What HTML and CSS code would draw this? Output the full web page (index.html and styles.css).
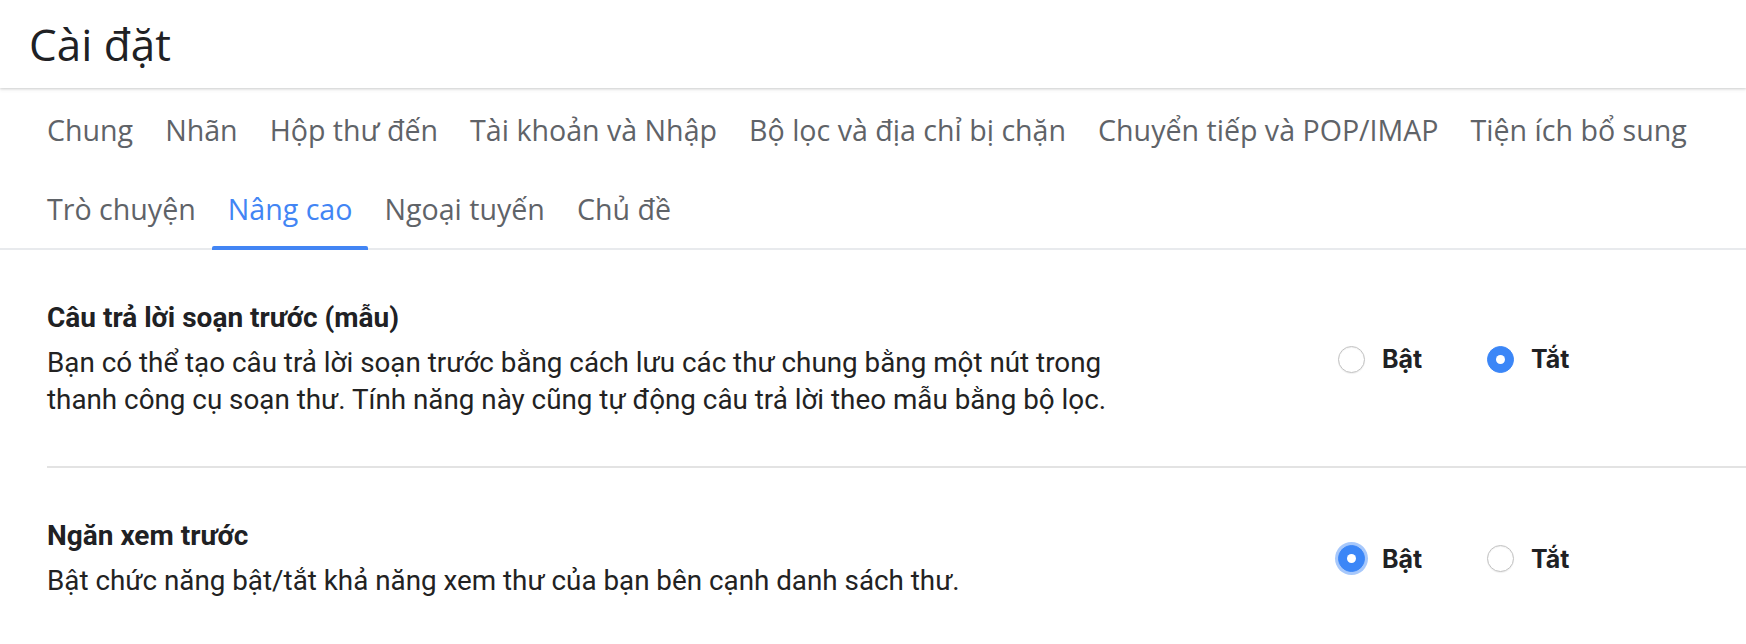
FILE: index.html
```html
<!DOCTYPE html>
<html lang="vi">
<head>
<meta charset="utf-8">
<title>Cài đặt</title>
<link rel="stylesheet" href="styles.css">
</head>
<body>
<header class="topbar">
  <h1 class="title">Cài đặt</h1>
</header>
<nav class="tabs">
  <div class="tab-row">
    <a class="tab">Chung</a>
    <a class="tab">Nhãn</a>
    <a class="tab">Hộp thư đến</a>
    <a class="tab">Tài khoản và Nhập</a>
    <a class="tab">Bộ lọc và địa chỉ bị chặn</a>
    <a class="tab">Chuyển tiếp và POP/IMAP</a>
    <a class="tab">Tiện ích bổ sung</a>
  </div>
  <div class="tab-row">
    <a class="tab">Trò chuyện</a>
    <a class="tab active">Nâng cao</a>
    <a class="tab">Ngoại tuyến</a>
    <a class="tab">Chủ đề</a>
  </div>
</nav>
<main class="content">
  <section class="setting">
    <div class="setting-text">
      <h2 class="setting-title">Câu trả lời soạn trước (mẫu)</h2>
      <p class="setting-desc">Bạn có thể tạo câu trả lời soạn trước bằng cách lưu các thư chung bằng một nút trong thanh công cụ soạn thư. Tính năng này cũng tự động câu trả lời theo mẫu bằng bộ lọc.</p>
    </div>
    <div class="options">
      <label class="option"><span class="radio"></span><span class="option-label">Bật</span></label>
      <label class="option"><span class="radio checked"></span><span class="option-label">Tắt</span></label>
    </div>
  </section>
  <hr class="divider">
  <section class="setting">
    <div class="setting-text">
      <h2 class="setting-title">Ngăn xem trước</h2>
      <p class="setting-desc">Bật chức năng bật/tắt khả năng xem thư của bạn bên cạnh danh sách thư.</p>
    </div>
    <div class="options">
      <label class="option"><span class="radio checked focused"></span><span class="option-label">Bật</span></label>
      <label class="option"><span class="radio"></span><span class="option-label">Tắt</span></label>
    </div>
  </section>
</main>
</body>
</html>
```

FILE: styles.css
```css
* { box-sizing: border-box; }

body {
  margin: 0;
  background: #ffffff;
  font-family: "Roboto", "Liberation Sans", sans-serif;
  color: #202124;
  overflow: hidden;
}

.topbar {
  height: 88px;
  display: flex;
  align-items: center;
  padding-left: 29px;
  background: #fff;
  box-shadow: 0 1px 2px rgba(60, 64, 67, 0.18), 0 2px 4px rgba(60, 64, 67, 0.08);
  position: relative;
  z-index: 1;
}

.title {
  margin: 0;
  font-family: "Open Sans", "Noto Sans", sans-serif;
  font-weight: 400;
  font-size: 44px;
  color: #202124;
  letter-spacing: 0;
}

.tabs {
  margin-top: 2px;
  padding-left: 31px;
  border-bottom: 2px solid #e8eaed;
}

.tab-row {
  display: flex;
  height: 79px;
}

.tab {
  display: flex;
  align-items: center;
  padding: 0 16px;
  font-family: "Open Sans", "Noto Sans", sans-serif;
  font-weight: 500;
  font-size: 28.6px;
  color: #5f6368;
  position: relative;
  white-space: nowrap;
}

.tab.active {
  color: #4285f4;
}

.tab.active::after {
  content: "";
  position: absolute;
  left: 0;
  right: 0;
  bottom: -2px;
  height: 4px;
  background: #4285f4;
  border-radius: 2px 2px 0 0;
}

.content {
  padding-left: 47px;
}

.setting {
  display: flex;
  align-items: center;
  padding: 50px 0 48px;
}

.setting-text {
  width: 1291px;
  flex: 0 0 1291px;
}

.setting-title {
  margin: 0 0 8px;
  font-weight: 700;
  font-size: 28px;
  line-height: 36px;
  color: #202124;
}

.setting-desc {
  margin: 0;
  max-width: 1100px;
  font-size: 27.8px;
  line-height: 37px;
  color: #222222;
}

.divider {
  margin: 0;
  border: 0;
  height: 2px;
  background: #e3e3e3;
}

.options {
  display: flex;
}

.option {
  width: 149px;
  display: flex;
  align-items: center;
  gap: 17px;
}

.radio {
  width: 27px;
  height: 27px;
  flex: 0 0 27px;
  border-radius: 50%;
  background: #fff;
  border: 1.5px solid #c2c2c2;
  box-shadow: inset 0 1px 1px rgba(0, 0, 0, 0.06), 0 1px 1px rgba(0, 0, 0, 0.06);
  display: flex;
  align-items: center;
  justify-content: center;
}

.radio.checked {
  background: #3b86f7;
  border-color: #3b86f7;
  box-shadow: none;
}

.radio.checked::after {
  content: "";
  width: 9px;
  height: 9px;
  border-radius: 50%;
  background: #fff;
}

.radio.focused {
  box-shadow: 0 0 0 3px rgba(59, 134, 247, 0.45);
}

.option-label {
  font-family: "Inter", "Liberation Sans", sans-serif;
  font-weight: 700;
  font-size: 25px;
  color: #202124;
}
```
